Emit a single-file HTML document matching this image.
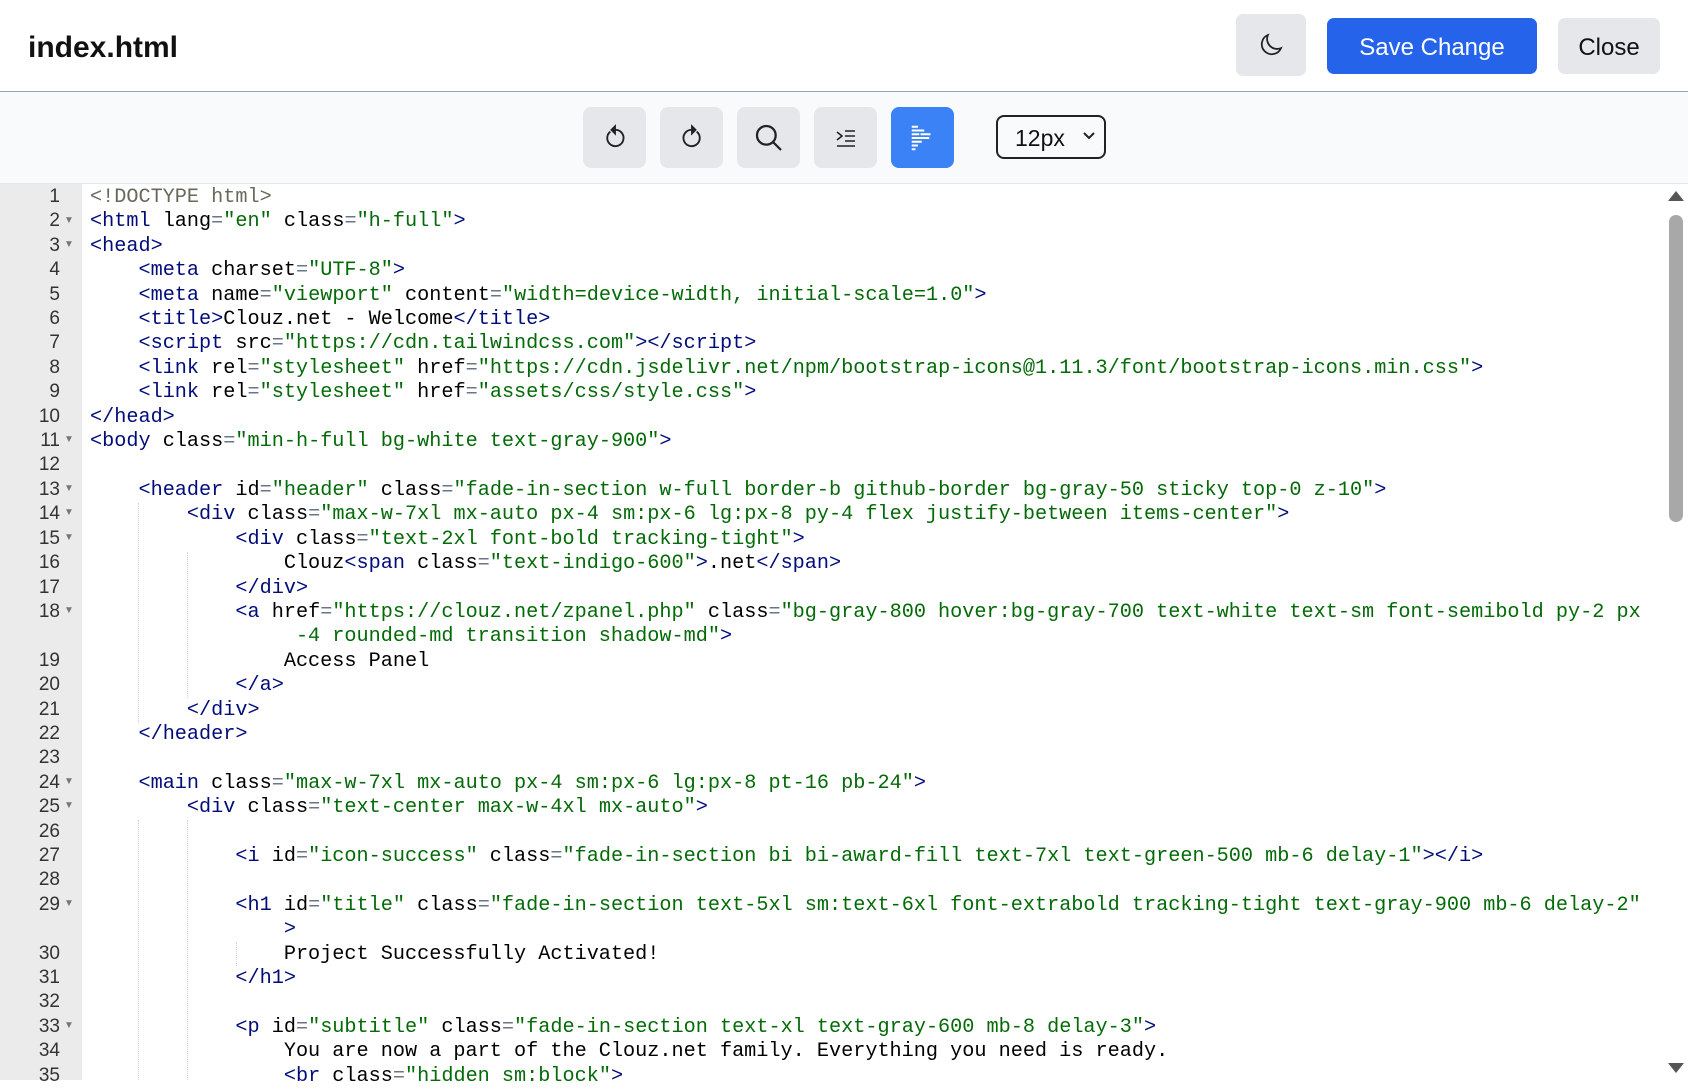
<!DOCTYPE html>
<html><head><style>
*{margin:0;padding:0;box-sizing:border-box}
body{width:1688px;height:1080px;overflow:hidden;background:#fff;font-family:"Liberation Sans",sans-serif;position:relative}
.hdr{position:absolute;left:0;top:0;width:1688px;height:92px;background:#fff;border-bottom:1px solid #9ca3af}
.title{position:absolute;left:28px;top:31px;font-size:30px;font-weight:bold;color:#111}
.btn{position:absolute;border-radius:7px;display:flex;align-items:center;justify-content:center;font-size:24px}
.tb{position:absolute;left:0;top:92px;width:1688px;height:92px;background:#f9fafb;border-bottom:1px solid #e5e7eb}
.tbtn{position:absolute;top:15px;width:63px;height:61px;border-radius:8px;background:#e5e7eb;display:flex;align-items:center;justify-content:center}
.gut{position:absolute;left:0;top:184px;width:82px;height:896px;background:#ebebeb}
.nums{position:absolute;left:0;top:185px;width:60px;text-align:right;font-family:"Liberation Sans",sans-serif;font-size:19px;line-height:24.4px;color:#333}
.fold{position:absolute;left:64px;font-size:10px;color:#777}
pre{position:absolute;left:90px;top:186px;font-family:"Liberation Mono",monospace;font-size:20.2px;line-height:24.4px;color:#000}
.t{color:#000c7a}.s{color:#036a07}.o{color:#687687}.d{color:#68685b}
.g{position:absolute;width:1px;border-left:1px dotted #d0d0d0}
</style></head><body>
<div class="hdr">
<div class="title">index.html</div>
<div class="btn" style="left:1236px;top:14px;width:70px;height:62px;background:#e5e7eb"><svg width="30" height="30" viewBox="0 0 24 24" fill="none" stroke="#222" stroke-width="1.4"><path d="M20 14.5A8 8 0 0 1 9.5 4a8 8 0 1 0 10.5 10.5z"/></svg></div>
<div class="btn" style="left:1327px;top:18px;width:210px;height:56px;background:#2563eb;color:#fff;padding-top:3px">Save Change</div>
<div class="btn" style="left:1558px;top:18px;width:102px;height:56px;background:#e5e7eb;color:#111;padding-top:3px">Close</div>
</div>
<div class="tb">
<div class="tbtn" style="left:583px"><svg width="28" height="28" viewBox="0 0 24 24" fill="none" stroke="#222" stroke-width="1.6"><path d="M8 6.5A7 7 0 1 0 12 5"/><path d="M12 2v6l-3-3z" fill="#222"/></svg></div>
<div class="tbtn" style="left:660px"><svg width="28" height="28" viewBox="0 0 24 24" fill="none" stroke="#222" stroke-width="1.6"><path d="M16 6.5A7 7 0 1 1 12 5"/><path d="M12 2v6l3-3z" fill="#222"/></svg></div>
<div class="tbtn" style="left:737px"><svg width="32" height="32" viewBox="0 0 24 24" fill="none" stroke="#222" stroke-width="1.7"><circle cx="10" cy="10" r="7"/><path d="M15 15l6 6"/></svg></div>
<div class="tbtn" style="left:814px"><svg width="24" height="24" viewBox="0 0 24 24" fill="none" stroke="#222" stroke-width="1.6"><path d="M3 6l5 4-5 4M11 5h10M11 10h10M11 15h10M3 20h18"/></svg></div>
<div class="tbtn" style="left:891px;background:#3b82f6"><svg width="30" height="30" viewBox="0 0 24 24" stroke="#fff" stroke-width="1.6"><path d="M3 3h5M3 6h10M3 9h6M10 9h8M3 12h14M3 15h8M3 18h5M3 21h3"/></svg></div>
<div style="position:absolute;left:996px;top:23px;width:110px;height:44px;border:2.5px solid #222;border-radius:8px;font-size:23px;padding:8px 0 0 17px;color:#111">12px<svg style="position:absolute;right:8px;top:14px" width="14" height="10" viewBox="0 0 14 10" fill="none" stroke="#222" stroke-width="2"><path d="M2 2l5 5 5-5"/></svg></div>
</div>
<div class="gut"></div>
<div class="nums">1<br>2<br>3<br>4<br>5<br>6<br>7<br>8<br>9<br>10<br>11<br>12<br>13<br>14<br>15<br>16<br>17<br>18<br><br>19<br>20<br>21<br>22<br>23<br>24<br>25<br>26<br>27<br>28<br>29<br><br>30<br>31<br>32<br>33<br>34<br>35</div>
<div class="fold" style="top:215px">&#9660;</div><div class="fold" style="top:239px">&#9660;</div><div class="fold" style="top:434px">&#9660;</div><div class="fold" style="top:483px">&#9660;</div><div class="fold" style="top:507px">&#9660;</div><div class="fold" style="top:532px">&#9660;</div><div class="fold" style="top:605px">&#9660;</div><div class="fold" style="top:776px">&#9660;</div><div class="fold" style="top:800px">&#9660;</div><div class="fold" style="top:898px">&#9660;</div><div class="fold" style="top:1020px">&#9660;</div>
<div class="g" style="left:138px;top:503px;height:220px"></div>
<div class="g" style="left:187px;top:552px;height:146px"></div>
<div class="g" style="left:138px;top:820px;height:260px"></div>
<div class="g" style="left:187px;top:820px;height:260px"></div>
<div class="g" style="left:236px;top:942px;height:24px"></div>
<pre><span class="d">&lt;!DOCTYPE html&gt;</span>
<span class="t">&lt;html</span> lang<span class="o">=</span><span class="s">"en"</span> class<span class="o">=</span><span class="s">"h-full"</span><span class="t">&gt;</span>
<span class="t">&lt;head&gt;</span>
    <span class="t">&lt;meta</span> charset<span class="o">=</span><span class="s">"UTF-8"</span><span class="t">&gt;</span>
    <span class="t">&lt;meta</span> name<span class="o">=</span><span class="s">"viewport"</span> content<span class="o">=</span><span class="s">"width=device-width, initial-scale=1.0"</span><span class="t">&gt;</span>
    <span class="t">&lt;title&gt;</span>Clouz.net - Welcome<span class="t">&lt;/title&gt;</span>
    <span class="t">&lt;script</span> src<span class="o">=</span><span class="s">"https://cdn.tailwindcss.com"</span><span class="t">&gt;&lt;/script&gt;</span>
    <span class="t">&lt;link</span> rel<span class="o">=</span><span class="s">"stylesheet"</span> href<span class="o">=</span><span class="s">"https://cdn.jsdelivr.net/npm/bootstrap-icons@1.11.3/font/bootstrap-icons.min.css"</span><span class="t">&gt;</span>
    <span class="t">&lt;link</span> rel<span class="o">=</span><span class="s">"stylesheet"</span> href<span class="o">=</span><span class="s">"assets/css/style.css"</span><span class="t">&gt;</span>
<span class="t">&lt;/head&gt;</span>
<span class="t">&lt;body</span> class<span class="o">=</span><span class="s">"min-h-full bg-white text-gray-900"</span><span class="t">&gt;</span>

    <span class="t">&lt;header</span> id<span class="o">=</span><span class="s">"header"</span> class<span class="o">=</span><span class="s">"fade-in-section w-full border-b github-border bg-gray-50 sticky top-0 z-10"</span><span class="t">&gt;</span>
        <span class="t">&lt;div</span> class<span class="o">=</span><span class="s">"max-w-7xl mx-auto px-4 sm:px-6 lg:px-8 py-4 flex justify-between items-center"</span><span class="t">&gt;</span>
            <span class="t">&lt;div</span> class<span class="o">=</span><span class="s">"text-2xl font-bold tracking-tight"</span><span class="t">&gt;</span>
                Clouz<span class="t">&lt;span</span> class<span class="o">=</span><span class="s">"text-indigo-600"</span><span class="t">&gt;</span>.net<span class="t">&lt;/span&gt;</span>
            <span class="t">&lt;/div&gt;</span>
            <span class="t">&lt;a</span> href<span class="o">=</span><span class="s">"https://clouz.net/zpanel.php"</span> class<span class="o">=</span><span class="s">"bg-gray-800 hover:bg-gray-700 text-white text-sm font-semibold py-2 px</span>
<span class="s">                 -4 rounded-md transition shadow-md"</span><span class="t">&gt;</span>
                Access Panel
            <span class="t">&lt;/a&gt;</span>
        <span class="t">&lt;/div&gt;</span>
    <span class="t">&lt;/header&gt;</span>

    <span class="t">&lt;main</span> class<span class="o">=</span><span class="s">"max-w-7xl mx-auto px-4 sm:px-6 lg:px-8 pt-16 pb-24"</span><span class="t">&gt;</span>
        <span class="t">&lt;div</span> class<span class="o">=</span><span class="s">"text-center max-w-4xl mx-auto"</span><span class="t">&gt;</span>

            <span class="t">&lt;i</span> id<span class="o">=</span><span class="s">"icon-success"</span> class<span class="o">=</span><span class="s">"fade-in-section bi bi-award-fill text-7xl text-green-500 mb-6 delay-1"</span><span class="t">&gt;&lt;/i&gt;</span>

            <span class="t">&lt;h1</span> id<span class="o">=</span><span class="s">"title"</span> class<span class="o">=</span><span class="s">"fade-in-section text-5xl sm:text-6xl font-extrabold tracking-tight text-gray-900 mb-6 delay-2"</span>
                <span class="t">&gt;</span>
                Project Successfully Activated!
            <span class="t">&lt;/h1&gt;</span>

            <span class="t">&lt;p</span> id<span class="o">=</span><span class="s">"subtitle"</span> class<span class="o">=</span><span class="s">"fade-in-section text-xl text-gray-600 mb-8 delay-3"</span><span class="t">&gt;</span>
                You are now a part of the Clouz.net family. Everything you need is ready.
                <span class="t">&lt;br</span> class<span class="o">=</span><span class="s">"hidden sm:block"</span><span class="t">&gt;</span></pre>
<div style="position:absolute;left:1666px;top:184px;width:22px;height:896px;background:#fff"></div>
<div style="position:absolute;left:1668px;top:191px;width:0;height:0;border-left:8px solid transparent;border-right:8px solid transparent;border-bottom:10px solid #555"></div>
<div style="position:absolute;left:1668px;top:1063px;width:0;height:0;border-left:8px solid transparent;border-right:8px solid transparent;border-top:10px solid #555"></div>
<div style="position:absolute;left:1669px;top:215px;width:14px;height:307px;background:#a8a8a8;border-radius:7px"></div>
</body></html>
